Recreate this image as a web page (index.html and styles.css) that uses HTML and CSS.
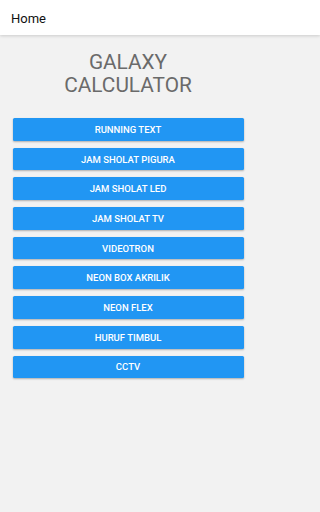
FILE: index.html
```html
<!DOCTYPE html>
<html>
<head>
<meta charset="utf-8">
<link rel="stylesheet" href="styles.css">
</head>
<body>
<header class="toolbar"><span class="toolbar-title">Home</span></header>
<main class="content">
  <h1 class="title">GALAXY<br>CALCULATOR</h1>
  <nav class="menu">
    <button class="btn">RUNNING TEXT</button>
    <button class="btn">JAM SHOLAT PIGURA</button>
    <button class="btn">JAM SHOLAT LED</button>
    <button class="btn">JAM SHOLAT TV</button>
    <button class="btn">VIDEOTRON</button>
    <button class="btn">NEON BOX AKRILIK</button>
    <button class="btn">NEON FLEX</button>
    <button class="btn">HURUF TIMBUL</button>
    <button class="btn">CCTV</button>
  </nav>
</main>
</body>
</html>
```
FILE: styles.css
```css
html {
  background: #f2f2f2;
}
html, body {
  margin: 0;
  padding: 0;
  font-family: Roboto, "Noto Sans", sans-serif;
  overflow: hidden;
}
body {
  min-height: 512px;
}
.toolbar {
  height: 35px;
  background: #ffffff;
  display: flex;
  align-items: center;
  padding-left: 11px;
  box-shadow: 0 1px 3px rgba(0,0,0,0.16);
  position: relative;
}
.toolbar-title {
  font-size: 13px;
  color: #111;
  margin-top: 1px;
}
.content {
  width: 256px;
  display: flex;
  flex-direction: column;
  align-items: center;
}
.title {
  margin: 15.5px 0 0 0;
  font-weight: 400;
  font-size: 20.8px;
  line-height: 23.5px;
  color: #6a6a6a;
  text-align: center;
}
.menu {
  margin-top: 20.5px;
  display: flex;
  flex-direction: column;
  gap: 7px;
  width: 231px;
}
.btn {
  height: 22.7px;
  border: none;
  border-radius: 1.5px;
  background: #2196f3;
  color: #fff;
  font-family: Roboto, "Noto Sans", sans-serif;
  font-weight: 500;
  font-size: 9.5px;
  padding: 0;
  box-shadow: 0 1px 2px rgba(0,0,0,0.28);
}
```
